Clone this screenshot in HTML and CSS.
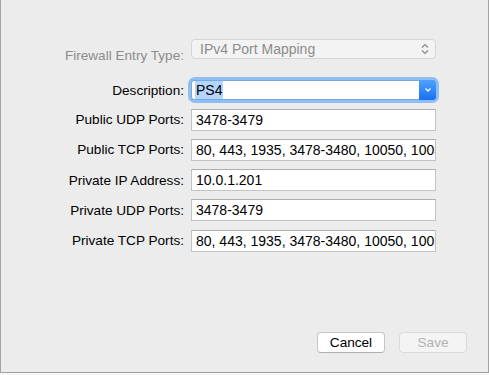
FILE: index.html
```html
<!DOCTYPE html>
<html lang="en">
<head>
  <meta charset="UTF-8">
  <title>Firewall Entry</title>
  <link rel="stylesheet" href="styles.css">
</head>
<body>

<div class="window">
  <div class="form">
    <div class="label disabled">Firewall Entry Type:</div>
    <div class="popup">
      <span>IPv4 Port Mapping</span>
      <svg class="updown" width="8" height="12" viewBox="0 0 8 12">
        <path d="M1 4.5 L4 1.5 L7 4.5 M1 7.5 L4 10.5 L7 7.5" fill="none" stroke="#8a8a8a" stroke-width="1.2"/>
      </svg>
    </div>

    <div class="label desc-label">Description:</div>
    <div class="combo">
      <div class="combo-text"><span class="selected">PS4</span></div>
      <div class="combo-btn">
        <svg width="8" height="6" viewBox="0 0 8 6">
          <path d="M1.5 1.5 L4 4 L6.5 1.5" fill="none" stroke="#fff" stroke-width="1.3"/>
        </svg>
      </div>
    </div>

    <div class="label">Public UDP Ports:</div>
    <div class="field">3478-3479</div>

    <div class="label">Public TCP Ports:</div>
    <div class="field">80, 443, 1935, 3478-3480, 10050, 10051</div>

    <div class="label">Private IP Address:</div>
    <div class="field">10.0.1.201</div>

    <div class="label">Private UDP Ports:</div>
    <div class="field">3478-3479</div>

    <div class="label">Private TCP Ports:</div>
    <div class="field">80, 443, 1935, 3478-3480, 10050, 10051</div>
  </div>

  <div class="buttons">
    <div class="btn">Cancel</div>
    <div class="btn btn-disabled">Save</div>
  </div>
</div>

</body>
</html>
```

FILE: styles.css
```css
body {
  margin: 0;
  background: #f6f6f6;
  font-family: "Liberation Sans", Arial, sans-serif;
  font-size: 13.6px;
  color: #000;
}
.window {
  width: 487px;
  height: 372px;
  background: #ececec;
  border: 1px solid #a3a3a3;
  border-top: none;
  box-shadow: 0 1px 2px rgba(0, 0, 0, 0.15);
  display: flex;
  flex-direction: column;
  justify-content: space-between;
}
.form {
  display: grid;
  grid-template-columns: 183px 245px;
  column-gap: 7px;
  row-gap: 8.3px;
  align-items: center;
  margin-top: 39px;
}
.label {
  text-align: right;
  white-space: nowrap;
}
.disabled {
  color: #8c8c8c;
}
.popup {
  height: 18px;
  border: 1px solid #d6d6d6;
  border-radius: 4px;
  background: #f3f3f3;
  color: #8c8c8c;
  font-size: 14px;
  display: flex;
  align-items: center;
  justify-content: space-between;
  padding: 0 6px 0 8px;
  margin-bottom: 13px;
}
.updown {
  display: block;
}
.combo {
  height: 20px;
  display: flex;
  border-radius: 4px;
  box-shadow: 0 0 0 3px #8ebef2;
}
.combo-text {
  flex: 1;
  background: #fff;
  border: 1px solid #7aa7dc;
  border-right: none;
  border-radius: 3px 0 0 3px;
  display: flex;
  align-items: center;
  padding-left: 3px;
  font-size: 14px;
}
.selected {
  background: #b4d5fe;
  padding: 1px 1px;
}
.combo-btn {
  width: 17px;
  background: linear-gradient(#4ea2fc, #1a6ff6);
  border-radius: 0 3px 3px 0;
  display: flex;
  align-items: center;
  justify-content: center;
}
.field {
  height: 20px;
  line-height: 20px;
  background: #fff;
  border: 1px solid #c3c3c3;
  border-top-color: #aeaeae;
  padding-left: 4px;
  font-size: 14px;
  white-space: nowrap;
  overflow: hidden;
}
.buttons {
  display: flex;
  justify-content: flex-end;
  gap: 14px;
  padding: 0 21px 19px 0;
}
.btn {
  width: 66px;
  height: 19px;
  line-height: 19px;
  text-align: center;
  background: #fff;
  border: 1px solid #c6c6c6;
  border-bottom-color: #b0b0b0;
  border-radius: 4px;
}
.btn-disabled {
  background: #f4f4f4;
  border-color: #dadada;
  color: #b2b2b2;
}
```
